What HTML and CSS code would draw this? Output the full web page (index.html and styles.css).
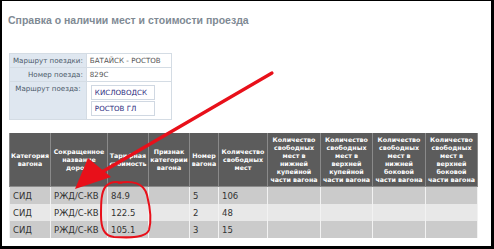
FILE: index.html
```html
<!DOCTYPE html>
<html>
<head>
<meta charset="utf-8">
<link rel="stylesheet" href="styles.css">
</head>
<body>
<div class="frame">
  <h1 class="title">Справка о наличии мест и стоимости проезда</h1>
  <table class="info">
    <tr><td class="lbl">Маршрут поездки:</td><td class="val">БАТАЙСК - РОСТОВ</td></tr>
    <tr><td class="lbl">Номер поезда:</td><td class="val">829С</td></tr>
    <tr><td class="lbl top">Маршрут поезда:</td><td class="val">
      <table class="route">
        <tr><td>КИСЛОВОДСК</td></tr>
        <tr><td>РОСТОВ ГЛ</td></tr>
      </table>
    </td></tr>
  </table>
  <table class="grid">
    <colgroup>
      <col style="width:41px"><col style="width:57px"><col style="width:41px"><col style="width:41px"><col style="width:29px"><col style="width:49px"><col style="width:53px"><col style="width:52px"><col style="width:53px"><col style="width:52px">
    </colgroup>
    <thead>
      <tr>
        <th>Категория вагона</th>
        <th>Сокращенное название дороги</th>
        <th>Тарифная стоимость</th>
        <th>Признак категории вагона</th>
        <th>Номер вагона</th>
        <th>Количество свободных мест</th>
        <th>Количество свободных мест в нижней купейной части вагона</th>
        <th>Количество свободных мест в верхней купейной части вагона</th>
        <th>Количество свободных мест в нижней боковой части вагона</th>
        <th>Количество свободных мест в верхней боковой части вагона</th>
      </tr>
    </thead>
    <tbody>
      <tr class="dark"><td>СИД</td><td>РЖД/С-КВ</td><td>84.9</td><td></td><td>5</td><td>106</td><td></td><td></td><td></td><td></td></tr>
      <tr class="light"><td>СИД</td><td>РЖД/С-КВ</td><td>122.5</td><td></td><td>2</td><td>48</td><td></td><td></td><td></td><td></td></tr>
      <tr class="dark"><td>СИД</td><td>РЖД/С-КВ</td><td>105.1</td><td></td><td>3</td><td>15</td><td></td><td></td><td></td><td></td></tr>
    </tbody>
  </table>
  <svg class="marks" width="494" height="249" viewBox="0 0 494 249">
    <line x1="272" y1="73" x2="95" y2="176" stroke="#e8101a" stroke-width="3.2" stroke-linecap="round"/>
    <polygon points="75,189 88,158 111,177" fill="#e8101a"/>
    <path d="M118,183 C132,180 144,183 147,195 C150,207 152,220 149,230 C146,238 130,238 114,237 C104,236 101,228 101,215 C101,203 101,192 106,186 C110,182 116,181 122,183" fill="none" stroke="#e8101a" stroke-width="2"/>
  </svg>
</div>
</body>
</html>
```
FILE: styles.css
```css
html, body {
  margin: 0;
  padding: 0;
  background: #fff;
}
.frame {
  position: relative;
  box-sizing: border-box;
  width: 494px;
  height: 249px;
  border-top: 1px solid #000;
  border-left: 2px solid #000;
  border-right: 3px solid #000;
  border-bottom: 3px solid #000;
  padding: 12px 0 0 6px;
  font-family: "DejaVu Sans", Verdana, sans-serif;
  overflow: hidden;
}
.title {
  margin: 0;
  font-family: "Liberation Sans", Arial, sans-serif;
  font-size: 10.5px;
  line-height: 14px;
  font-weight: bold;
  color: #808a94;
}
.info {
  margin: 26px 0 0 1px;
  border-collapse: collapse;
  border: 1px solid #c8d2dc;
  font-size: 7.1px;
}
.info td {
  border: 1px solid #d4dce4;
  padding: 0 3px;
  height: 13px;
}
.info .lbl {
  width: 69px;
  background: #dfe7f0;
  color: #4c5a6a;
  text-align: right;
  white-space: nowrap;
}
.info .lbl.top {
  vertical-align: top;
  padding-top: 2px;
  text-align: center;
}
.info .val {
  width: 78px;
  background: #fff;
  color: #555;
  white-space: nowrap;
}
.route {
  border-collapse: separate;
  border-spacing: 0 1px;
  margin: 2px 0 2px 1px;
}
.info .route td {
  border: 1px solid #d0d8e2;
  width: 56px;
  height: 13px;
  color: #2c2c80;
  font-weight: normal;
  padding: 0 3px;
}
.grid {
  margin: 13px 0 0 1px;
  border-collapse: collapse;
  table-layout: fixed;
  width: 468px;
}
.grid th {
  background: #5c5c5c;
  color: #fff;
  font-size: 6.3px;
  line-height: 8px;
  font-weight: bold;
  text-align: center;
  vertical-align: middle;
  height: 53px;
  padding: 0;
  border: 1px solid #8a8a8a;
  border-top: none;
  overflow: hidden;
}
.grid td {
  font-size: 8.5px;
  color: #333;
  padding: 0 0 0 3px;
  height: 17px;
  border-left: 1px solid #f2f2f2;
  border-right: 1px solid #f2f2f2;
  white-space: nowrap;
}
.grid tr.dark td {
  background: #cbcbcb;
}
.grid tr.light td {
  background: #e8e8e8;
}
.marks {
  position: absolute;
  left: -2px;
  top: -1px;
  pointer-events: none;
}
```
